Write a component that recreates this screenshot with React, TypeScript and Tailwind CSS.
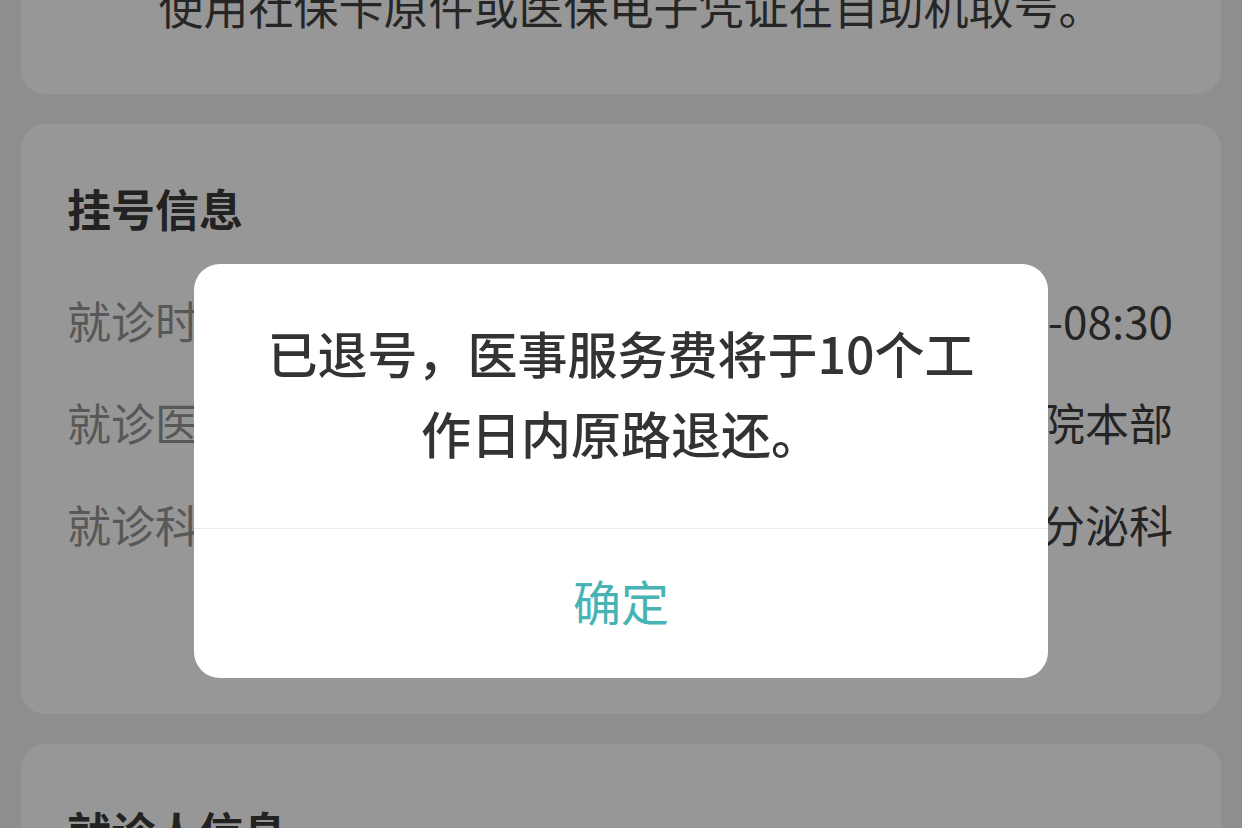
import React from 'react';

const font = { fontFamily: '"Noto Sans CJK SC", "Noto Sans", sans-serif' };

function InfoRow({ label, value }: { label: string; value: string }) {
  return (
    <div className="flex items-center justify-between h-[56px]">
      <span className="text-[#585858]">{label}</span>
      <span className="text-[#242424]">{value}</span>
    </div>
  );
}

export default function App() {
  return (
    <div
      className="relative w-[1242px] h-[828px] overflow-hidden bg-[#8e8e8e] px-[21px] text-[44px] leading-[56px]"
      style={font}
    >
      {/* 取号提示 */}
      <div className="-mt-[62px] pt-[40px] pb-[60px] pl-[20px] rounded-[24px] bg-[#979797] text-center text-[45px] text-[#262626]">
        使用社保卡原件或医保电子凭证在自助机取号。
      </div>

      {/* 挂号信息 */}
      <div className="mt-[30px] rounded-[24px] bg-[#979797] pl-[46px] pr-[48px] pt-[56px] pb-[162px]">
        <h2 className="font-bold text-[#222]">挂号信息</h2>
        <div className="mt-[56px] flex flex-col gap-[46px]">
          <InfoRow label="就诊时间" value="2024-03-15 上午 08:00-08:30" />
          <InfoRow label="就诊医院" value="北京协和医院本部" />
          <InfoRow label="就诊科室" value="内分泌科" />
        </div>
      </div>

      {/* 就诊人信息 */}
      <div className="mt-[30px] rounded-[24px] bg-[#979797] pl-[46px] pr-[48px] pt-[59px] pb-[80px]">
        <h2 className="font-bold text-[#222]">就诊人信息</h2>
      </div>

      {/* 弹窗 */}
      <div className="absolute left-[194px] top-[264px] w-[854px] rounded-[26px] bg-white overflow-hidden">
        <div className="px-[64px] pt-[48px] pb-[56px] text-center text-[50px] leading-[80px] font-medium text-[#333]">
          已退号，医事服务费将于10个工作日内原路退还。
        </div>
        <div className="h-px bg-[#ececec]" />
        <button className="w-full h-[149px] pb-[8px] text-[48px] text-[#48b3b5]">确定</button>
      </div>
    </div>
  );
}
